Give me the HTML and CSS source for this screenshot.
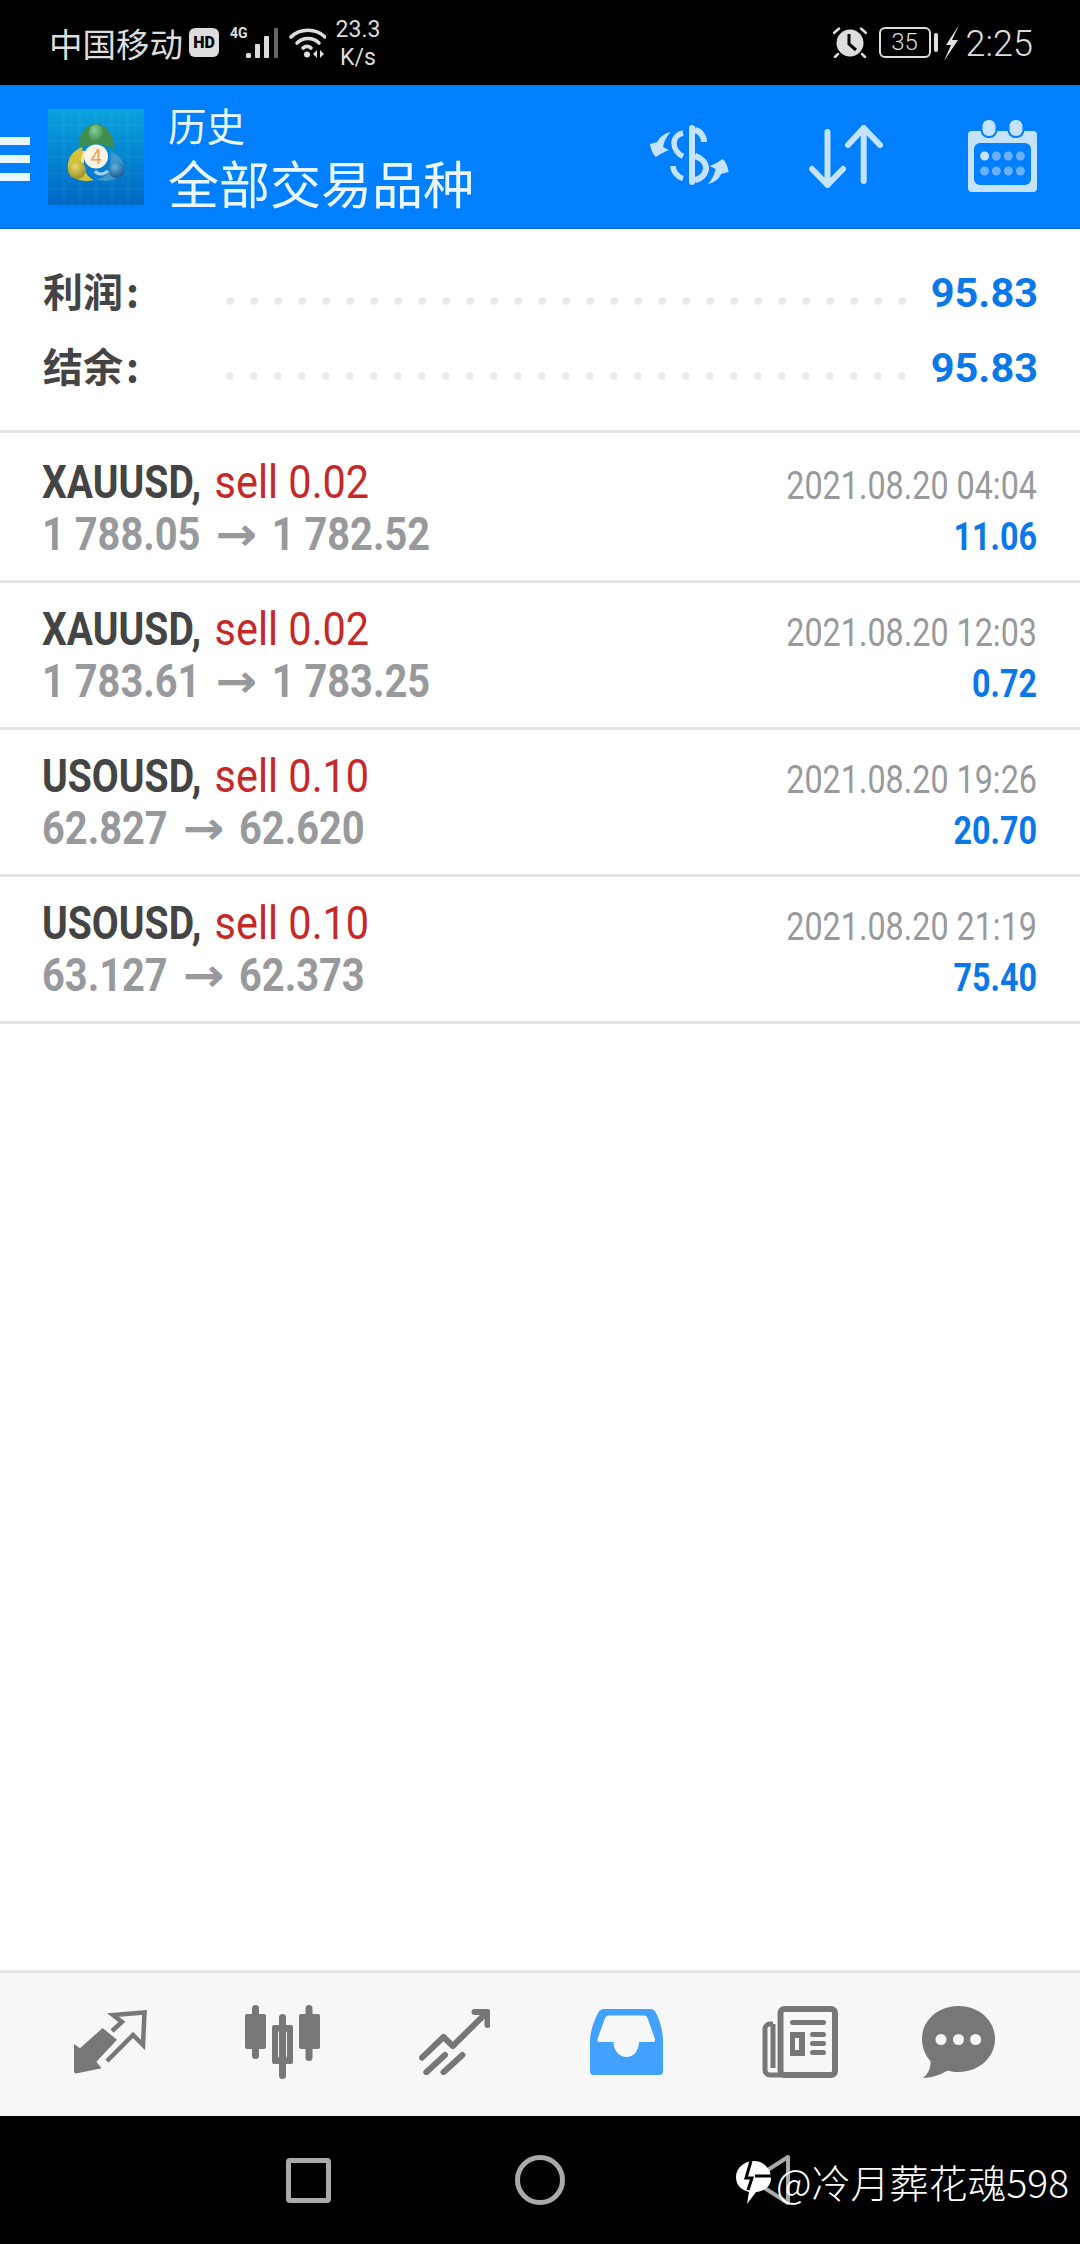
FILE: index.html
```html
<!DOCTYPE html>
<html lang="zh">
<head>
  <meta charset="UTF-8">
  <title>历史</title>
  <link rel="stylesheet" href="styles.css">
</head>
<body>
  <!-- status bar -->
  <div class="statusbar">
    <span class="carrier">中国移动</span>
    <span class="hd">HD</span>
    <span class="net">
      <span class="net-4g">4G</span>
      <svg class="signal" width="33" height="30" viewBox="0 0 33 30">
        <rect x="0" y="25" width="5" height="5" rx="1.5" fill="#ddd"/>
        <rect x="9" y="16" width="5" height="14" rx="1" fill="#ddd"/>
        <rect x="18" y="8" width="5" height="22" rx="1" fill="#ddd"/>
        <rect x="28" y="0" width="4" height="30" rx="1" fill="#666"/>
      </svg>
    </span>
    <svg class="wifi" width="37" height="30" viewBox="0 0 37 30" fill="none" stroke="#ddd" stroke-width="3.6" stroke-linecap="round">
      <path d="M2 9C11 0 27 0 36 9"/>
      <path d="M8 15C14 9 24 9 30 15"/>
      <path d="M14 20C16.500 18 19.500 18 22 20"/>
      <circle cx="18" cy="26.500" r="3" fill="#ddd" stroke="none"/>
      <path d="M28 22L24 26L28 30ZM31 22L35 26L31 30Z" fill="#ddd" stroke="none"/>
    </svg>
    <div class="speed"><span>23.3</span><span>K/s</span></div>
    <div class="grow"></div>
    <svg class="alarm" width="34" height="31" viewBox="0 0 34 31">
      <circle cx="17" cy="16" r="13.500" fill="#ddd"/>
      <path d="M16 7V17L23 23" fill="none" stroke="#000" stroke-width="3"/>
      <path d="M1 6L6 1.500M33 6L28 1.500M5 27L2 30M29 27L32 30" stroke="#ddd" stroke-width="2.500" stroke-linecap="round"/>
    </svg>
    <div class="battery"><span>35</span></div>
    <span class="battery-nub"></span>
    <svg class="bolt" width="15" height="36" viewBox="0 0 15 36"><path d="M15 0L2 20H7L0 36L14 15H8Z" fill="#e4e4e4"/></svg>
    <span class="clock">2:25</span>
  </div>

  <!-- app bar -->
  <div class="appbar">
    <div class="burger"><i></i><i></i><i></i></div>
    <svg class="logo" width="96" height="96" viewBox="0 0 96 96">
      <defs>
        <linearGradient id="logoBg" x1="0" y1="0" x2="0" y2="1">
          <stop offset="0" stop-color="#0aa2dc"/>
          <stop offset="1" stop-color="#0068c4"/>
        </linearGradient>
        <radialGradient id="ballG" cx=".4" cy=".3" r=".8"><stop offset="0" stop-color="#8ccf98"/><stop offset="1" stop-color="#2c7f3c"/></radialGradient>
        <radialGradient id="ballY" cx=".4" cy=".3" r=".8"><stop offset="0" stop-color="#e6dc6a"/><stop offset="1" stop-color="#8f8220"/></radialGradient>
        <radialGradient id="ballB" cx=".4" cy=".3" r=".8"><stop offset="0" stop-color="#5cb4e0"/><stop offset="1" stop-color="#134f80"/></radialGradient>
      </defs>
      <rect width="96" height="96" fill="url(#logoBg)"/>
      <path d="M16 0V96M32 0V96M48 0V96M64 0V96M80 0V96M0 16H96M0 32H96M0 48H96M0 64H96M0 80H96" stroke="#fff" stroke-opacity=".07"/>
      <path d="M31 40C29 26 38 15 48 15C58 15 67 26 65 40C60 34 36 34 31 40Z" fill="#3f8f50"/>
      <path d="M34 38C24 42 19 50 20 60C23 70 35 74 46 71C38 68 34 58 36 50Z" fill="#d4c238"/>
      <path d="M63 42C72 46 77 54 75 62C70 72 58 74 47 70C54 70 60 66 62 60Z" fill="#3d97c9"/>
      <path d="M47 62C50 66 55 66 60 62" fill="none" stroke="#9fd2ec" stroke-width="3"/>
      <path d="M36 42L34 54" fill="none" stroke="#efe48a" stroke-width="3"/>
      <ellipse cx="48" cy="24.500" rx="7.500" ry="9" fill="url(#ballG)"/>
      <circle cx="29" cy="61" r="9" fill="url(#ballY)"/>
      <circle cx="68.500" cy="61" r="8" fill="url(#ballB)"/>
      <circle cx="48" cy="47.500" r="12" fill="#fdf4e8"/>
      <text x="48" y="54.500" class="logo-four">4</text>
    </svg>
    <div class="titles">
      <div class="title-small">历史</div>
      <div class="title-big">全部交易品种</div>
    </div>
    <svg class="act-dollar" width="79" height="60" viewBox="0 0 79 60" fill="none" stroke="#c5e3ff" stroke-width="6">
      <rect x="39" y="0" width="6" height="60" rx="3" fill="#c5e3ff" stroke="none"/>
      <path d="M33 8C28 9 24 13 24 18C24 24 28 29 33 31.500" stroke-width="5.500"/>
      <path d="M45 5C50 6 54 11 54 17"/>
      <path d="M45 31C52 33 56 38 56 43C56 49 51 54 45 55"/>
      <path d="M23 41C23 47 28 52 33 53.500" stroke-width="5.500"/>
      <path d="M20.500 7C13 9 9 13 7.500 17L0 19C1 25 3 30 6 32C10 29 14 27 19 25L13 22C14 17 16 12 20.500 7Z" fill="#c5e3ff" stroke="none"/>
      <path d="M58 59C65.600 57 69.600 53 71 49L78.600 47C77.600 41 75.600 36 72.600 34C68.600 37 64.600 39 59.600 41L65.600 44C64.600 49 62.600 54 58 59Z" fill="#c5e3ff" stroke="none"/>
    </svg>
    <svg class="act-sort" width="74" height="64" viewBox="0 0 74 64" fill="none" stroke="#c5e3ff" stroke-width="6" stroke-linecap="round" stroke-linejoin="round">
      <path d="M18.500 7V60M3 44L18.500 60L34 44"/>
      <path d="M54.700 3V56M39 20L54.700 3L71 20"/>
    </svg>
    <svg class="act-cal" width="69" height="72" viewBox="0 0 69 72">
      <rect x="0" y="11" width="69" height="61" rx="4" fill="#c5e3ff"/>
      <rect x="6" y="23" width="57" height="42" rx="6" fill="#007fff"/>
      <rect x="13.500" y="-1" width="15" height="18" rx="7" fill="#c5e3ff" stroke="#007fff" stroke-width="2"/>
      <rect x="40.500" y="-1" width="15" height="18" rx="7" fill="#c5e3ff" stroke="#007fff" stroke-width="2"/>
      <g fill="#6ab0ff">
        <circle cx="16.600" cy="36" r="4.500" fill="#c5e3ff"/>
        <circle cx="28.300" cy="36" r="4.500"/>
        <circle cx="40.300" cy="36" r="4.500"/>
        <circle cx="52.400" cy="36" r="4.500"/>
        <circle cx="16.600" cy="51" r="4.500"/>
        <circle cx="28.300" cy="51" r="4.500"/>
        <circle cx="40.300" cy="51" r="4.500"/>
        <circle cx="52.400" cy="51" r="4.500"/>
      </g>
    </svg>
  </div>

  <!-- totals -->
  <div class="summary">
    <div class="summary-row">
      <span class="summary-label">利润<span class="colon">:</span></span>
      <span class="dots"></span>
      <span class="summary-value">95.83</span>
    </div>
    <div class="summary-row">
      <span class="summary-label">结余<span class="colon">:</span></span>
      <span class="dots"></span>
      <span class="summary-value">95.83</span>
    </div>
  </div>

  <!-- deals -->
  <div class="deals">
    <div class="deal">
      <div class="deal-left">
        <div class="narrow"><b class="symbol">XAUUSD,</b> <span class="side">sell 0.02</span></div>
        <div class="narrow prices">1 788.05 <span class="arrow">→</span> 1 782.52</div>
      </div>
      <div class="deal-right">
        <div class="narrow-r date">2021.08.20 04:04</div>
        <div class="narrow-r profit">11.06</div>
      </div>
    </div>
    <div class="deal">
      <div class="deal-left">
        <div class="narrow"><b class="symbol">XAUUSD,</b> <span class="side">sell 0.02</span></div>
        <div class="narrow prices">1 783.61 <span class="arrow">→</span> 1 783.25</div>
      </div>
      <div class="deal-right">
        <div class="narrow-r date">2021.08.20 12:03</div>
        <div class="narrow-r profit">0.72</div>
      </div>
    </div>
    <div class="deal">
      <div class="deal-left">
        <div class="narrow"><b class="symbol">USOUSD,</b> <span class="side">sell 0.10</span></div>
        <div class="narrow prices">62.827 <span class="arrow">→</span> 62.620</div>
      </div>
      <div class="deal-right">
        <div class="narrow-r date">2021.08.20 19:26</div>
        <div class="narrow-r profit">20.70</div>
      </div>
    </div>
    <div class="deal">
      <div class="deal-left">
        <div class="narrow"><b class="symbol">USOUSD,</b> <span class="side">sell 0.10</span></div>
        <div class="narrow prices">63.127 <span class="arrow">→</span> 62.373</div>
      </div>
      <div class="deal-right">
        <div class="narrow-r date">2021.08.20 21:19</div>
        <div class="narrow-r profit">75.40</div>
      </div>
    </div>
  </div>

  <!-- tabs -->
  <div class="tabs">
    <svg class="tab" width="73" height="64" viewBox="0 0 73 64">
      <path d="M0 34L6 38.300L28.600 18L43 29.700L22.400 51.700L27.600 58.300L2 63.500Q0 63.500 0 61Z" fill="#777"/>
      <path d="M38 21L48 12L39 5L70.500 2.500L69 35L59 25L33 51" fill="none" stroke="#777" stroke-width="4.500"/>
    </svg>
    <svg class="tab" width="75" height="74" viewBox="0 0 75 74" fill="#777">
      <rect x="7" y="0" width="7" height="54" rx="3.500"/>
      <rect x="0" y="9" width="21" height="35" rx="2"/>
      <rect x="34" y="9" width="7" height="65" rx="3.500"/>
      <path fill-rule="evenodd" d="M29 20H46a2 2 0 0 1 2 2V57a2 2 0 0 1-2 2H29a2 2 0 0 1-2-2V22a2 2 0 0 1 2-2ZM35 26a2 2 0 0 0-2 2V51a2 2 0 0 0 2 2H40a2 2 0 0 0 2-2V28a2 2 0 0 0-2-2Z"/>
      <rect x="60.500" y="0" width="7" height="56" rx="3.500"/>
      <rect x="54" y="9" width="21" height="35" rx="2"/>
    </svg>
    <svg class="tab" width="71" height="66" viewBox="0 0 71 66" fill="none" stroke="#777" stroke-width="6" stroke-linecap="round" stroke-linejoin="round">
      <path d="M3 48.700L24.500 28L33.800 37L65.800 5.300"/>
      <path d="M55.500 3H68.500V16"/>
      <path d="M26 46L7.300 63.300"/>
      <path d="M43.400 46L24.500 63.300"/>
    </svg>
    <svg class="tab" width="73" height="66" viewBox="0 0 73 66">
      <path d="M14 0H60C63 0 65 2 66 4C70 12 73 22 73 32V62a4 4 0 0 1-4 4H4a4 4 0 0 1-4-4V32C0 22 4 12 8 4C9 2 11 0 14 0Z" fill="#42a0ff"/>
      <path d="M19 6.500H54C56 6.500 57 7.500 57.500 9L65 30C65.500 32 64.500 33 63 33H49C49 42 43 48 36.500 48S23.500 42 23.500 33H9C7.500 33 7 32 7.500 30L15 9C16 7.500 17 6.500 19 6.500Z" fill="#f7f7f7"/>
    </svg>
    <svg class="tab tab-news" width="76" height="72" viewBox="0 0 76 72">
      <rect x="18.500" y="3" width="54.500" height="66" rx="4" fill="none" stroke="#777" stroke-width="6"/>
      <path d="M11 18H8a5 5 0 0 0-5 5V64a5 5 0 0 0 5 5H20M11 18V62" fill="none" stroke="#777" stroke-width="5"/>
      <rect x="28" y="14" width="36" height="5" rx="2.500" fill="#777"/>
      <path fill-rule="evenodd" d="M28 26H43V50H28ZM33 32V44H37V32Z" fill="#777"/>
      <rect x="48" y="26" width="16" height="5" rx="2.500" fill="#777"/>
      <rect x="48" y="35" width="16" height="5" rx="2.500" fill="#777"/>
      <rect x="48" y="44" width="16" height="5" rx="2.500" fill="#777"/>
    </svg>
    <svg class="tab" width="73" height="72" viewBox="0 0 73 72">
      <path d="M36.500 0C56.500 0 73 14 73 33C73 52 56 66 36.500 66C33 66 29 65.500 26 64.500C19 68 11 72 1 72C7 67 9 61 8.500 55C3 49 0 41 0 33C0 14 16.500 0 36.500 0Z" fill="#777"/>
      <circle cx="19" cy="33.500" r="5.500" fill="#f7f7f7"/>
      <circle cx="36.500" cy="33.500" r="5.500" fill="#f7f7f7"/>
      <circle cx="53.600" cy="33.500" r="5.500" fill="#f7f7f7"/>
    </svg>
  </div>

  <!-- system nav -->
  <div class="sysnav">
    <span class="nav-square"></span>
    <span class="nav-circle"></span>
    <svg class="nav-back" width="42" height="52" viewBox="0 0 42 52"><path d="M39 3V49L3 26Z" fill="none" stroke="#aaa" stroke-width="4" stroke-linejoin="round"/></svg>
    <div class="watermark">
      <svg class="wm-icon" width="36" height="44" viewBox="0 0 36 44">
        <path d="M18 1C28 1 35 9 35 18C35 27 28 31 20 32L11 44L13 32C5 30 0 25 0 17C0 8 8 1 18 1Z" fill="#fff"/>
        <path d="M15 1L10 18H16L12 30" fill="none" stroke="#000" stroke-width="3"/>
        <path d="M19 16H35" stroke="#000" stroke-width="3"/>
      </svg>
      <span class="wm-text">@冷月葬花魂598</span>
    </div>
  </div>
</body>
</html>
```

FILE: styles.css
```css
html, body {
  margin: 0;
  padding: 0;
}

body {
  width: 1080px;
  height: 2244px;
  overflow: hidden;
  display: flex;
  flex-direction: column;
  background: #fff;
  font-family: Roboto, "Noto Sans CJK SC", sans-serif;
}

/* Status bar */
.statusbar {
  height: 85px;
  background: #000;
  color: #ddd;
  display: flex;
  align-items: center;
  padding: 0 47px 0 49px;
  box-sizing: border-box;
}

.carrier {
  font-family: "Noto Sans CJK SC", sans-serif;
  font-size: 33.5px;
  line-height: 40px;
}

.hd {
  margin-left: 6px;
  width: 30px;
  height: 29px;
  border-radius: 6px;
  background: #ddd;
  color: #000;
  font-size: 16px;
  font-weight: 900;
  line-height: 29px;
  text-align: center;
}

.net {
  margin-left: 11px;
  height: 30px;
  display: flex;
  align-items: flex-end;
}

.net-4g {
  align-self: flex-start;
  width: 18px;
  margin-top: -3px;
  font-size: 14px;
  font-weight: 700;
  line-height: 16px;
  white-space: nowrap;
}

.signal {
  margin-left: -2px;
}

.wifi {
  margin-left: 10px;
}

.speed {
  margin-left: 9px;
  width: 46px;
  display: flex;
  flex-direction: column;
  align-items: center;
  font-size: 23px;
  line-height: 28px;
  margin-top: 3px;
}

.grow {
  flex: 1;
}

.battery {
  margin-left: 12px;
  width: 52px;
  height: 31px;
  box-sizing: border-box;
  border: 2px solid #ddd;
  border-radius: 6px;
  text-align: center;
  font-size: 24px;
  font-weight: 300;
  line-height: 27px;
}

.battery-nub {
  margin-left: 3px;
  width: 4px;
  height: 19px;
  border-radius: 2px;
  background: #ddd;
}

.bolt {
  margin-left: 6px;
}

.clock {
  margin-left: 7px;
  margin-top: 2px;
  font-size: 36px;
  font-weight: 300;
}

/* App bar */
.appbar {
  height: 144px;
  box-sizing: border-box;
  background: #007fff;
  border-bottom: 2px solid #0a6fd8;
  display: flex;
  align-items: flex-start;
}

.burger {
  width: 30px;
  margin-top: 52px;
  display: flex;
  flex-direction: column;
  gap: 10px;
}

.burger i {
  display: block;
  height: 8px;
  background: #e8f6ff;
}

.logo {
  margin: 24px 0 0 18px;
}

.titles {
  margin-left: 24px;
  width: 471px;
  color: #eaf7ff;
  font-family: "Noto Sans CJK SC", sans-serif;
}

.title-small {
  margin-top: 13px;
  font-size: 38.5px;
  line-height: 52px;
}

.title-big {
  font-size: 51px;
  line-height: 64px;
}

.logo-four {
  font-family: Roboto, sans-serif;
  font-size: 20px;
  fill: #f0a050;
  text-anchor: middle;
}

.act-dollar {
  margin: 40px 0 0 11px;
}

.act-sort {
  margin: 40px 0 0 80px;
}

.act-cal {
  margin: 35px 0 0 85px;
}

/* Totals */
.summary {
  height: 204px;
  box-sizing: border-box;
  padding: 26px 42px 0 43px;
  border-bottom: 3px solid #e4e4e6;
}

.summary-row {
  height: 75px;
  display: flex;
  align-items: center;
}

.summary-label {
  width: 175px;
  margin-top: -5px;
  font-family: "Noto Sans CJK SC", sans-serif;
  font-size: 40px;
  font-weight: 700;
  color: #444;
}

.colon {
  margin-left: 3px;
}

.dots {
  flex: 1;
  height: 8px;
  margin-top: 16px;
  background-image: radial-gradient(circle, #e8e8e8 3.4px, transparent 4px);
  background-size: 24px 8px;
  background-repeat: repeat-x;
}

.summary-value {
  width: 124px;
  text-align: right;
  font-size: 41.5px;
  font-weight: 700;
  color: #0a78e8;
}

/* Deals */
.deals {
  flex: 1;
  padding-top: 3px;
}

.deal {
  height: 147px;
  box-sizing: border-box;
  padding: 20px 43px 0 42px;
  border-bottom: 3px solid #e4e4e6;
  display: flex;
  justify-content: space-between;
}

.deal-left {
  width: 600px;
}

.deal-right {
  width: 340px;
  padding-top: 5px;
}

.narrow,
.narrow-r {
  white-space: nowrap;
  transform: scaleX(.85);
}

.narrow {
  font-size: 46px;
  line-height: 52px;
  transform-origin: left center;
}

.narrow-r {
  text-align: right;
  font-size: 38px;
  line-height: 51px;
  transform-origin: right center;
}

.symbol {
  color: #444;
}

.side {
  display: inline-block;
  margin-left: 4px;
  color: #c62828;
  transform: scaleX(1.06);
  transform-origin: left center;
}

.prices {
  font-weight: 700;
  color: #98999c;
  transform: scaleX(.865);
}

.arrow {
  display: inline-block;
  font-family: "DejaVu Sans", sans-serif;
  line-height: 40px;
  margin: 0 15px 0 6px;
  transform: scaleX(1.25);
  transform-origin: left center;
}

.date {
  color: #98999c;
}

.profit {
  font-weight: 700;
  color: #0a78e8;
}

/* Tabs */
.tabs {
  height: 146px;
  box-sizing: border-box;
  background: #f7f7f7;
  border-top: 3px solid #e6e6e6;
  padding: 0 0 6px 24px;
  display: grid;
  grid-template-columns: repeat(5, 172px) 148px;
  align-items: center;
  justify-items: center;
}

.tab-news {
  margin-left: 3px;
}

/* System nav */
.sysnav {
  height: 128px;
  background: #000;
  position: relative;
  display: flex;
  align-items: center;
  gap: 184px;
  padding-left: 286px;
  box-sizing: border-box;
}

.nav-square {
  width: 45px;
  height: 45px;
  box-sizing: border-box;
  border: 5px solid #aaa;
  border-radius: 4px;
}

.nav-circle {
  width: 50px;
  height: 50px;
  box-sizing: border-box;
  border: 5px solid #aaa;
  border-radius: 50%;
}

.watermark {
  position: absolute;
  top: 44px;
  left: 736px;
  display: flex;
  align-items: center;
}

.wm-text {
  margin: -3px 0 0 4px;
  font-family: "Noto Sans CJK SC", sans-serif;
  font-size: 39px;
  font-weight: 300;
  line-height: 44px;
  color: #fff;
  white-space: nowrap;
}
```
